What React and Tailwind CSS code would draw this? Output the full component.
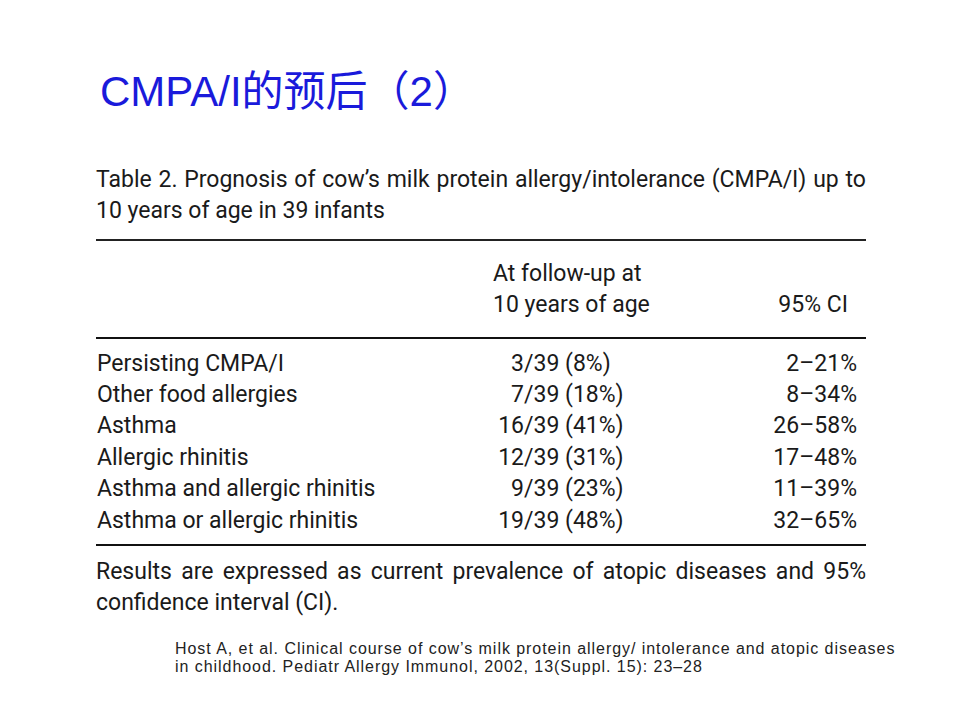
import React from "react";

// Table rows: label, numerator, rest of the middle cell, confidence interval
const rows = [
  ["Persisting CMPA/I", "3", "/39 (8%)", "2–21%"],
  ["Other food allergies", "7", "/39 (18%)", "8–34%"],
  ["Asthma", "16", "/39 (41%)", "26–58%"],
  ["Allergic rhinitis", "12", "/39 (31%)", "17–48%"],
  ["Asthma and allergic rhinitis", "9", "/39 (23%)", "11–39%"],
  ["Asthma or allergic rhinitis", "19", "/39 (48%)", "32–65%"],
];

const tableFont = { fontFamily: "Roboto, 'Liberation Sans', sans-serif" };

const App = () => {
  return (
    <div className="w-[960px] h-[720px] bg-white overflow-hidden text-[#1a1a1a]">
      {/* Title */}
      <h1
        className="pl-[100px] pt-[70px] text-[42px] leading-[44px] text-[#1a1adb]"
        style={{ fontFamily: "'Liberation Sans', 'Noto Sans CJK SC', sans-serif" }}
      >
        CMPA/I的预后（2）
      </h1>

      {/* Table block */}
      <div className="ml-[96px] w-[770px] mt-[50px] text-[23px] leading-[31.4px]" style={tableFont}>
        <p className="text-justify [text-align-last:justify]">
          Table 2. Prognosis of cow’s milk protein allergy/intolerance (CMPA/I) up to
        </p>
        <p>10 years of age in 39 infants</p>

        <div className="mt-[12.5px] h-[1.5px] bg-[#222]" />

        {/* Header */}
        <div className="mt-[17px] flex">
          <div className="w-[397px]" />
          <div>
            <div>At follow-up at</div>
            <div>10 years of age</div>
          </div>
          <div className="flex-1 flex items-end justify-end pr-[18px]">95% CI</div>
        </div>

        <div className="mt-[16px] h-[2px] bg-[#111]" />

        {/* Body */}
        <div className="mt-[9px] pl-px">
          {rows.map(([label, num, rest, ci]) => (
            <div key={label} className="flex">
              <div className="w-[400px]">{label}</div>
              <div className="w-[27px] text-right">{num}</div>
              <div className="w-[150px]">{rest}</div>
              <div className="flex-1 text-right pr-[9px]">{ci}</div>
            </div>
          ))}
        </div>

        <div className="mt-[8px] h-[2px] bg-[#111]" />

        {/* Footnote */}
        <p className="mt-[10px] text-justify [text-align-last:justify]">
          Results are expressed as current prevalence of atopic diseases and 95%
        </p>
        <p>confidence interval (CI).</p>
      </div>

      {/* Reference */}
      <div
        className="ml-[175px] mt-[21px] text-[16px] leading-[18px] tracking-[0.95px] text-[#222] whitespace-nowrap"
        style={{ fontFamily: "'Liberation Sans', Arial, sans-serif" }}
      >
        <p>Host A, et al. Clinical course of cow’s milk protein allergy/ intolerance and atopic diseases</p>
        <p>in childhood. Pediatr Allergy Immunol, 2002, 13(Suppl. 15): 23–28</p>
      </div>
    </div>
  );
};

export default App;
